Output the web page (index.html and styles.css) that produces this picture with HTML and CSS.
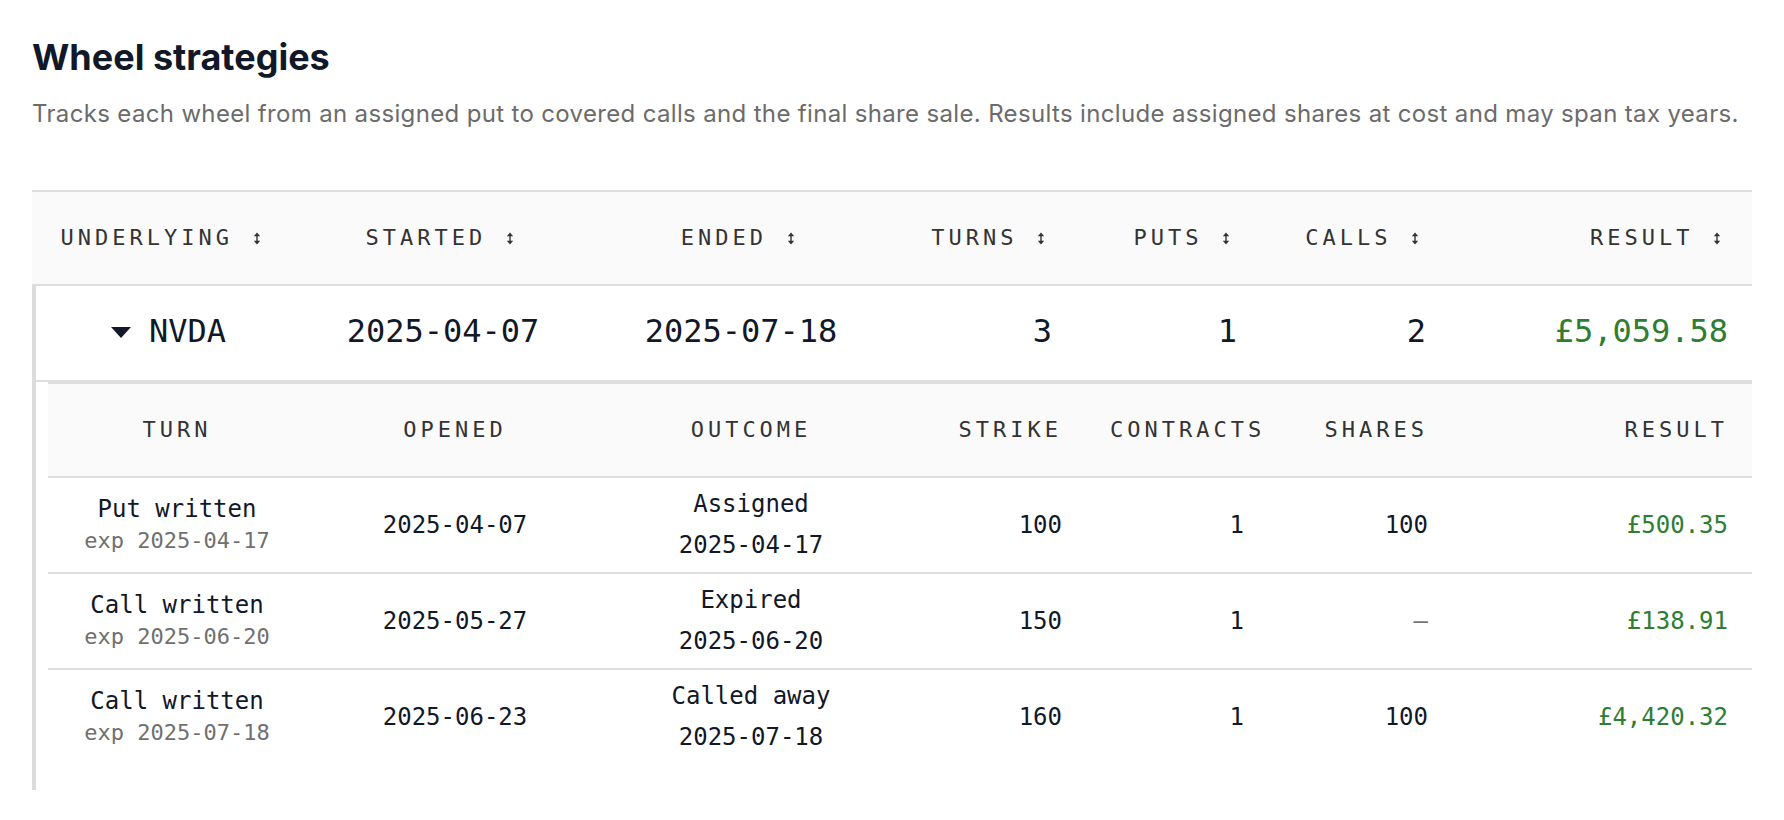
FILE: index.html
```html
<!DOCTYPE html>
<html lang="en">
<head>
<meta charset="utf-8">
<title>Wheel strategies</title>
<link rel="stylesheet" href="styles.css">
</head>
<body>
<main class="page">
  <h1 class="title">Wheel strategies</h1>
  <p class="subtitle">Tracks each wheel from an assigned put to covered calls and the final share sale. Results include assigned shares at cost and may span tax years.</p>

  <div class="table">
    <div class="row head main-cols">
      <div class="cell center">UNDERLYING <svg class="sort" width="8" height="13" viewBox="0 0 8 13"><path d="M4 0.5 L7.2 4.2 H4.7 V8.8 H7.2 L4 12.5 L0.8 8.8 H3.3 V4.2 H0.8 Z"/></svg></div>
      <div class="cell center">STARTED <svg class="sort" width="8" height="13" viewBox="0 0 8 13"><path d="M4 0.5 L7.2 4.2 H4.7 V8.8 H7.2 L4 12.5 L0.8 8.8 H3.3 V4.2 H0.8 Z"/></svg></div>
      <div class="cell center">ENDED <svg class="sort" width="8" height="13" viewBox="0 0 8 13"><path d="M4 0.5 L7.2 4.2 H4.7 V8.8 H7.2 L4 12.5 L0.8 8.8 H3.3 V4.2 H0.8 Z"/></svg></div>
      <div class="cell right">TURNS <svg class="sort" width="8" height="13" viewBox="0 0 8 13"><path d="M4 0.5 L7.2 4.2 H4.7 V8.8 H7.2 L4 12.5 L0.8 8.8 H3.3 V4.2 H0.8 Z"/></svg></div>
      <div class="cell right">PUTS <svg class="sort" width="8" height="13" viewBox="0 0 8 13"><path d="M4 0.5 L7.2 4.2 H4.7 V8.8 H7.2 L4 12.5 L0.8 8.8 H3.3 V4.2 H0.8 Z"/></svg></div>
      <div class="cell right">CALLS <svg class="sort" width="8" height="13" viewBox="0 0 8 13"><path d="M4 0.5 L7.2 4.2 H4.7 V8.8 H7.2 L4 12.5 L0.8 8.8 H3.3 V4.2 H0.8 Z"/></svg></div>
      <div class="cell right">RESULT <svg class="sort" width="8" height="13" viewBox="0 0 8 13"><path d="M4 0.5 L7.2 4.2 H4.7 V8.8 H7.2 L4 12.5 L0.8 8.8 H3.3 V4.2 H0.8 Z"/></svg></div>
    </div>

    <div class="group">
      <div class="row summary main-cols">
        <div class="cell center"><svg class="caret" width="20" height="11" viewBox="0 0 20 11"><path d="M0 0 H20 L10 11 Z"/></svg>NVDA</div>
        <div class="cell center">2025-04-07</div>
        <div class="cell center">2025-07-18</div>
        <div class="cell right">3</div>
        <div class="cell right">1</div>
        <div class="cell right">2</div>
        <div class="cell right gain">£5,059.58</div>
      </div>

      <div class="detail">
        <div class="subtable">
          <div class="row subhead sub-cols">
            <div class="cell center">TURN</div>
            <div class="cell center">OPENED</div>
            <div class="cell center">OUTCOME</div>
            <div class="cell right">STRIKE</div>
            <div class="cell right">CONTRACTS</div>
            <div class="cell right">SHARES</div>
            <div class="cell right">RESULT</div>
          </div>

          <div class="row leg sub-cols">
            <div class="cell center"><div class="leg-name">Put written</div><div class="leg-exp">exp 2025-04-17</div></div>
            <div class="cell center">2025-04-07</div>
            <div class="cell center outcome"><div>Assigned</div><div>2025-04-17</div></div>
            <div class="cell right">100</div>
            <div class="cell right">1</div>
            <div class="cell right">100</div>
            <div class="cell right gain">£500.35</div>
          </div>

          <div class="row leg sub-cols">
            <div class="cell center"><div class="leg-name">Call written</div><div class="leg-exp">exp 2025-06-20</div></div>
            <div class="cell center">2025-05-27</div>
            <div class="cell center outcome"><div>Expired</div><div>2025-06-20</div></div>
            <div class="cell right">150</div>
            <div class="cell right">1</div>
            <div class="cell right muted">—</div>
            <div class="cell right gain">£138.91</div>
          </div>

          <div class="row leg sub-cols">
            <div class="cell center"><div class="leg-name">Call written</div><div class="leg-exp">exp 2025-07-18</div></div>
            <div class="cell center">2025-06-23</div>
            <div class="cell center outcome"><div>Called away</div><div>2025-07-18</div></div>
            <div class="cell right">160</div>
            <div class="cell right">1</div>
            <div class="cell right">100</div>
            <div class="cell right gain">£4,420.32</div>
          </div>
        </div>
      </div>
    </div>
  </div>
</main>
</body>
</html>
```

FILE: styles.css
```css
* { box-sizing: border-box; }

body {
  margin: 0;
  background: #ffffff;
  color: #111827;
}

.page {
  padding: 35px 32px 0;
}

.title {
  margin: 0 0 20px;
  font-family: Inter, "Noto Sans", sans-serif;
  font-weight: 700;
  font-size: 36px;
  line-height: 44px;
  color: #111827;
}

.subtitle {
  margin: 0 0 62px;
  font-family: Inter, "Noto Sans", sans-serif;
  font-size: 24px;
  line-height: 29px;
  letter-spacing: 0.34px;
  color: #6b6b6b;
}

.table {
  border-top: 2px solid #dedede;
  font-family: "DejaVu Sans Mono", "Liberation Mono", monospace;
}

.main-cols {
  display: grid;
  grid-template-columns: 256px 302px 294px 188px 185px 189px 302px;
}

.sub-cols {
  display: grid;
  grid-template-columns: 258px 298px 294px 188px 182px 184px 300px;
}

.row {
  align-items: center;
}

.cell {
  padding: 0 24px;
  white-space: nowrap;
  min-width: 0;
}

.center { text-align: center; }
.right { text-align: right; }

.head,
.subhead {
  background: #fafafa;
  border-bottom: 2px solid #dedede;
  font-size: 22px;
  line-height: 24px;
  letter-spacing: 4px;
  color: #333333;
}

.head {
  height: 94px;
  padding-left: 4px;
}

.subhead {
  height: 94px;
}

.sort {
  margin: 0 6.6px 0 2.6px;
  fill: #333333;
  vertical-align: 0;
}

.group {
  border-left: 4px solid #dcdcdc;
}

.summary {
  height: 96px;
  padding-bottom: 4px;
  border-bottom: 2px solid #dedede;
  font-size: 32px;
  line-height: 38px;
  color: #111827;
}

.caret {
  margin: 0 18px 0 9px;
  fill: #111827;
  vertical-align: 4px;
}

.detail {
  padding: 0 0 26px 12px;
}

.subtable {
  border-top: 2px solid #dedede;
}

.leg {
  height: 96px;
  border-bottom: 2px solid #dedede;
  font-size: 24px;
  line-height: 31px;
  color: #111827;
}

.leg:last-child {
  height: 94px;
  border-bottom: 0;
}

.leg-exp {
  font-size: 22px;
  color: #707070;
}

.outcome {
  line-height: 41px;
}

.gain { color: #2e7d32; }
.muted { color: #777777; }
```
